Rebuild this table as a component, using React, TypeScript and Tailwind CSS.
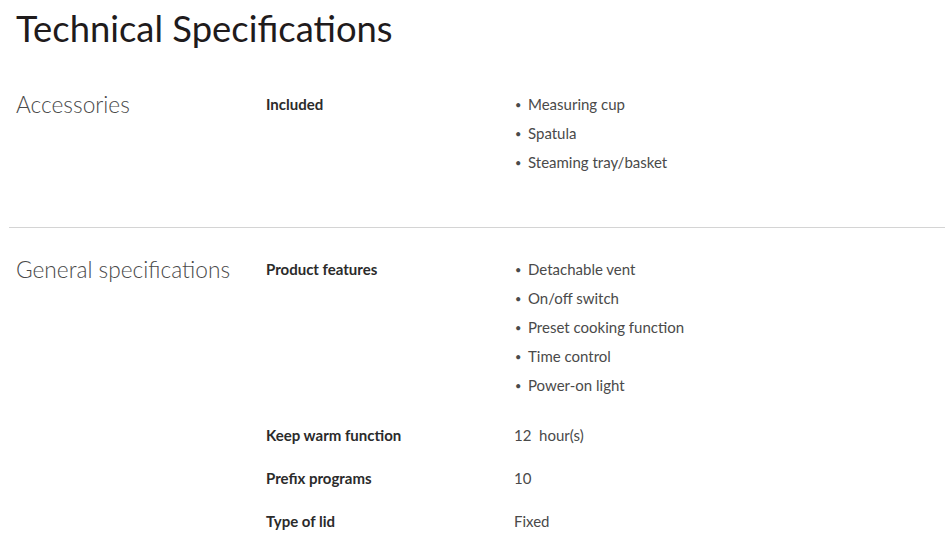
import React from 'react';

type Row = { label: string; values: string[]; list?: boolean };
type Section = { title: string; rows: Row[] };

const sections: Section[] = [
  {
    title: 'Accessories',
    rows: [{ label: 'Included', values: ['Measuring cup', 'Spatula', 'Steaming tray/basket'], list: true }],
  },
  {
    title: 'General specifications',
    rows: [
      {
        label: 'Product features',
        values: ['Detachable vent', 'On/off switch', 'Preset cooking function', 'Time control', 'Power-on light'],
        list: true,
      },
      { label: 'Keep warm function', values: ['12\u00a0 hour(s)'] },
      { label: 'Prefix programs', values: ['10'] },
      { label: 'Type of lid', values: ['Fixed'] },
    ],
  },
];

const SpecRow = ({ row }: { row: Row }) => (
  <div className={row.list ? 'grid grid-cols-[248px_1fr] pb-[7px]' : 'grid grid-cols-[248px_1fr]'}>
    <div className="text-[15px] leading-[29px] font-bold text-[#2b2b2b]">{row.label}</div>
    {row.list ? (
      <ul>
        {row.values.map((v) => (
          <li key={v} className="flex items-center text-[15px] leading-[29px] text-[#4a4a4a]">
            <span className="w-[14px] pl-[1px] text-[11px]">•</span>
            {v}
          </li>
        ))}
      </ul>
    ) : (
      <div className="text-[15px] leading-[29px] text-[#4a4a4a]">{row.values[0]}</div>
    )}
  </div>
);

export default function App() {
  return (
    <div className="min-h-screen bg-white font-['Lato',sans-serif]">
      <h1 className="px-4 pt-[8px] text-[36.4px] leading-[40px] text-[#1f1b1c]">Technical Specifications</h1>
      <div className="mt-[42px]">
        {sections.map((s, i) => (
          <div
            key={s.title}
            className={
              i === 0
                ? 'ml-[9px] grid grid-cols-[250px_1fr] border-b border-[#d4d4d4] pb-[43px] pl-[7px]'
                : 'ml-[9px] grid grid-cols-[250px_1fr] pt-[27px] pl-[7px]'
            }
          >
            <div className="text-[22.7px] font-light leading-[30px] text-[#4a4a4a]">{s.title}</div>
            <div className="flex flex-col gap-[14px]">
              {s.rows.map((r) => (
                <SpecRow key={r.label} row={r} />
              ))}
            </div>
          </div>
        ))}
      </div>
    </div>
  );
}
